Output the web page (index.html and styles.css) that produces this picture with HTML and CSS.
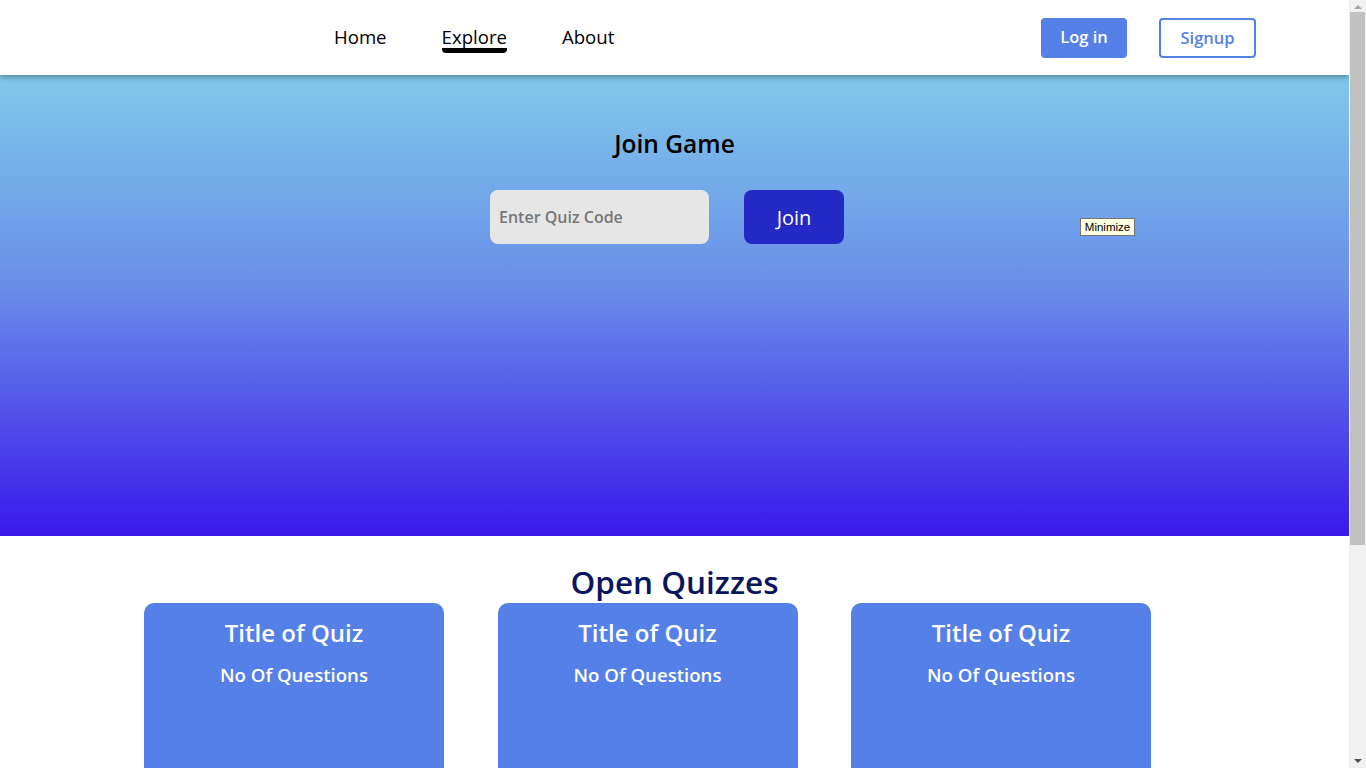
FILE: index.html
```html
<!DOCTYPE html>
<html lang="en">
<head>
<meta charset="utf-8">
<title>Quiz</title>
<link rel="stylesheet" href="styles.css">
</head>
<body>
<div class="page">
  <header class="topbar">
    <nav class="nav">
      <a class="nav-link" href="#">Home</a>
      <a class="nav-link active" href="#">Explore</a>
      <a class="nav-link" href="#">About</a>
    </nav>
    <div class="auth">
      <button class="btn-login">Log in</button>
      <button class="btn-signup">Signup</button>
    </div>
  </header>
  <section class="hero">
    <h2 class="hero-title">Join Game</h2>
    <form class="join-row">
      <input class="code-input" type="text" placeholder="Enter Quiz Code">
      <button class="btn-join" type="button">Join</button>
    </form>
    <div class="tooltip">Minimize</div>
  </section>
  <section class="quizzes">
    <h1 class="quizzes-title">Open Quizzes</h1>
    <div class="cards">
      <div class="card"><h3 class="card-title">Title of Quiz</h3><p class="card-sub">No Of Questions</p></div>
      <div class="card"><h3 class="card-title">Title of Quiz</h3><p class="card-sub">No Of Questions</p></div>
      <div class="card"><h3 class="card-title">Title of Quiz</h3><p class="card-sub">No Of Questions</p></div>
    </div>
  </section>
</div>
<div class="scrollbar">
  <span class="arrow arrow-up"></span>
  <span class="thumb"></span>
  <span class="arrow arrow-down"></span>
</div>
</body>
</html>
```
FILE: styles.css
```css
* { box-sizing: border-box; }
html { overflow: hidden; }
body {
  margin: 0;
  font-family: "Open Sans", "Noto Sans", sans-serif;
  background: #fff;
}
.page { width: 1349px; }
.topbar {
  position: relative;
  z-index: 2;
  height: 75px;
  background: #fff;
  box-shadow: 0 2px 6px rgba(0,0,0,0.35);
  display: flex;
  align-items: center;
  justify-content: space-between;
  padding: 0 93px 0 334px;
}
.nav { display: flex; gap: 55px; align-items: center; margin-top: -1px; }
.nav-link {
  color: #000;
  text-decoration: none;
  font-size: 18.6px;
  font-weight: 500;
  position: relative;
  line-height: 24px;
}
.nav-link.active::after {
  content: "";
  position: absolute;
  left: 0; right: 0;
  bottom: -4px;
  height: 5px;
  background: #000;
  border-radius: 0 0 4px 4px;
}
.auth { display: flex; gap: 32px; align-items: center; }
.btn-login, .btn-signup {
  font-family: inherit;
  font-size: 16.5px;
  font-weight: 600;
  height: 40px;
  border-radius: 4px;
  cursor: pointer;
}
.btn-login {
  width: 86px;
  background: #5580e8;
  color: #fff;
  border: none;
  padding-bottom: 4px;
}
.btn-signup {
  width: 97px;
  background: #fff;
  color: #5580e8;
  border: 2px solid #5580e8;
}
.hero {
  position: relative;
  height: 461px;
  background: linear-gradient(to bottom, #80c9ea 0%, #6a8fe9 45%, #3a18ea 100%);
  display: flex;
  flex-direction: column;
  align-items: center;
  padding-top: 54px;
}
.hero-title {
  margin: 0;
  font-size: 24.5px;
  font-weight: 600;
  color: #000;
  line-height: 30px;
}
.join-row {
  margin: 31px 15px 0 0;
  display: flex;
  gap: 35px;
}
.code-input {
  width: 219px;
  height: 54px;
  border: none;
  border-radius: 8px;
  background: #e6e6e6;
  padding: 0 9px;
  font-family: inherit;
  font-size: 16px;
  font-weight: 600;
  outline: none;
}
.code-input::placeholder { color: #777; }
.btn-join {
  width: 100px;
  height: 54px;
  border: none;
  border-radius: 8px;
  background: #2428c4;
  color: #fff;
  font-family: inherit;
  font-size: 20px;
  font-weight: 500;
}
.tooltip {
  position: absolute;
  left: 1080px;
  top: 143px;
  width: 55px;
  height: 18px;
  background: #ffffe1;
  border: 1px solid #767676;
  font-family: "Liberation Sans", sans-serif;
  font-size: 11.5px;
  line-height: 16px;
  text-align: center;
  color: #000;
}
.quizzes { padding-top: 25px; padding-bottom: 40px; }
.quizzes-title {
  margin: 0;
  text-align: center;
  font-size: 31.5px;
  font-weight: 600;
  color: #0a1560;
  line-height: 42px;
}
.cards {
  display: flex;
  gap: 53.5px;
  padding-left: 144px;
}
.card {
  width: 300px;
  height: 320px;
  background: #5580e8;
  border-radius: 10px;
  color: #fff;
  text-align: center;
  padding-top: 15px;
}
.card-title {
  margin: 0;
  font-size: 24px;
  font-weight: 600;
  line-height: 30px;
}
.card-sub {
  margin: 15px 0 0;
  font-size: 18.6px;
  font-weight: 600;
  line-height: 24px;
}
.scrollbar {
  position: fixed;
  top: 0;
  right: 0;
  width: 17px;
  height: 768px;
  background: #f1f1f1;
  z-index: 10;
  display: flex;
  flex-direction: column;
  align-items: center;
}
.arrow {
  width: 0;
  height: 0;
  border-left: 4px solid transparent;
  border-right: 4px solid transparent;
}
.arrow-up {
  margin-top: 5px;
  border-bottom: 4px solid #a3a3a3;
}
.arrow-down {
  margin-top: auto;
  margin-bottom: 5px;
  border-top: 4px solid #505050;
}
.thumb {
  width: 15px;
  height: 533px;
  margin-top: 3px;
  background: #c1c1c1;
}
```
